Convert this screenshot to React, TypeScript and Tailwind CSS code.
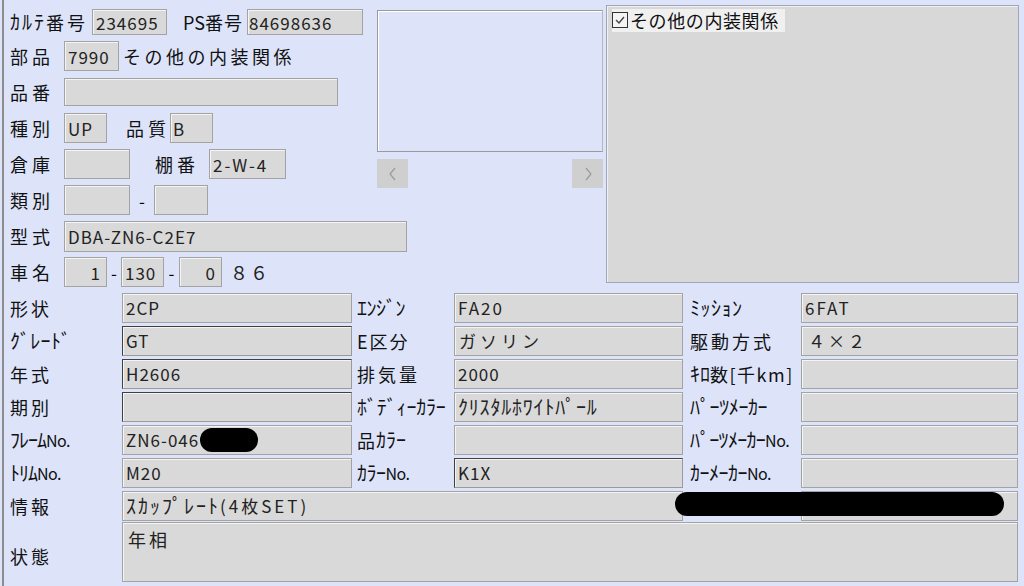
import React from "react";

const F = "font-['Noto_Sans_CJK_JP','Liberation_Sans',sans-serif]";

function Field({
  w,
  h = 30,
  children,
  dark = false,
  right = false,
  className = "",
}: {
  w: number;
  h?: number;
  children?: React.ReactNode;
  dark?: boolean;
  right?: boolean;
  className?: string;
}) {
  return (
    <div
      style={{ width: w, height: h }}
      className={`shrink-0 flex items-center bg-[#d9d9d9] border ${
        dark
          ? "border-t-[#404040] border-l-[#404040] border-r-[#9a9a9a] border-b-[#9a9a9a]"
          : "border-[#a3a3a3]"
      } shadow-[inset_1px_1px_0_#f4f4f4] px-[3px] text-[17px] tracking-[1px] leading-none text-[#222] overflow-hidden whitespace-nowrap ${
        right ? "justify-end" : ""
      } ${className}`}
    >
      {children}
    </div>
  );
}

function L({ w, children, className = "" }: { w: number; children?: React.ReactNode; className?: string }) {
  return (
    <div style={{ width: w }} className={`shrink-0 text-[18px] leading-none text-[#111] whitespace-nowrap flex items-center ${className}`}>
      {children}
    </div>
  );
}

function TopRow({ h = 36, children }: { h?: number; children: React.ReactNode }) {
  return (
    <div style={{ height: h }} className="flex items-center">
      {children}
    </div>
  );
}

function Half({ children, t = 1 }: { children: React.ReactNode; t?: number }) {
  return (
    <span style={{ letterSpacing: t - 1 }} className="text-[20px] leading-none">
      {children}
    </span>
  );
}

function No() {
  return <span className="text-[16px] tracking-[-0.5px] leading-none">No.</span>;
}

function Full({ children }: { children: React.ReactNode }) {
  return <span className="tracking-[3px]">{children}</span>;
}

function LowRow({
  l1,
  v1,
  d1,
  l2,
  v2,
  d2,
  l3,
  v3,
  d3,
}: {
  l1: React.ReactNode;
  v1?: React.ReactNode;
  d1?: boolean;
  l2: React.ReactNode;
  v2?: React.ReactNode;
  d2?: boolean;
  l3: React.ReactNode;
  v3?: React.ReactNode;
  d3?: boolean;
}) {
  return (
    <div className="flex items-center h-[33px]">
      <L w={114} className="pl-[2px]">{l1}</L>
      <Field w={230} dark={d1}>{v1}</Field>
      <L w={102} className="pl-[5px]">{l2}</L>
      <Field w={229} dark={d2}>{v2}</Field>
      <L w={118} className="pl-[7px]">{l3}</L>
      <Field w={217} dark={d3}>{v3}</Field>
    </div>
  );
}

export default function App() {
  return (
    <div className={`${F} w-[1024px] h-[586px] bg-[#dde4fa] relative overflow-hidden`}>
      <div className="absolute left-[2px] top-0 bottom-0 w-[2px] bg-[#8c8c8c]" />
      <div className="pl-[8px] pt-[6px]">
        <div className="flex">
          {/* left column */}
          <div className="w-[369px] shrink-0 flex flex-col">
            <TopRow h={32}>
              <L w={84} className="pl-[2px]"><Half t={3}>ｶﾙﾃ</Half><span className="tracking-[3px]">番号</span></L>
              <Field w={75} h={26} className="pl-[3px] tracking-[1.5px]">234695</Field>
              <L w={64} className="ml-[16px]">PS<span className="tracking-[1px]">番号</span></L>
              <Field w={116} h={26} className="pl-[1px] tracking-[1.5px]">84698636</Field>
            </TopRow>
            <TopRow>
              <L w={56} className="pl-[2px] tracking-[4px]">部品</L>
              <Field w={55}>7990</Field>
              <div className="ml-[4px] text-[18px] leading-none tracking-[3.5px] whitespace-nowrap text-[#111]">その他の内装関係</div>
            </TopRow>
            <TopRow>
              <L w={56} className="pl-[2px] tracking-[4px]">品番</L>
              <Field w={274} h={28} />
            </TopRow>
            <TopRow>
              <L w={56} className="pl-[2px] tracking-[4px]">種別</L>
              <Field w={43}>UP</Field>
              <L w={44} className="ml-[19px] tracking-[4px]">品質</L>
              <Field w={43} className="pl-[2px]">B</Field>
            </TopRow>
            <TopRow>
              <L w={56} className="pl-[2px] tracking-[4px]">倉庫</L>
              <Field w={66} />
              <L w={54} className="ml-[25px] tracking-[4px]">棚番</L>
              <Field w={77} className="tracking-[2px]">2-W-4</Field>
            </TopRow>
            <TopRow>
              <L w={56} className="pl-[2px] tracking-[4px]">類別</L>
              <Field w={66} />
              <div className="w-[24px] text-center text-[17px] leading-none">-</div>
              <Field w={54} />
            </TopRow>
            <TopRow>
              <L w={56} className="pl-[2px] tracking-[4px]">型式</L>
              <Field w={343} h={31}>DBA-ZN6-C2E7</Field>
            </TopRow>
            <TopRow>
              <L w={56} className="pl-[2px] tracking-[4px]">車名</L>
              <Field w={43} right className="tracking-[0px] pr-[5px]">1</Field>
              <div className="w-[14px] text-center text-[17px] leading-none">-</div>
              <Field w={43}>130</Field>
              <div className="w-[15px] text-center text-[17px] leading-none">-</div>
              <Field w={43} right className="tracking-[0px] pr-[5px]">0</Field>
              <div className="ml-[8px] text-[18px] leading-none tracking-[2px] text-[#222]">８６</div>
            </TopRow>
          </div>

          {/* middle column: image */}
          <div className="w-[229px] shrink-0 flex flex-col pt-[4px]">
            <div className="w-[226px] h-[142px] border border-t-[#9a9a9a] border-l-[#9a9a9a] border-r-[#b8b8b8] border-b-[#9a9a9a] bg-[#dde4fa] shadow-[inset_1px_1px_0_#ffffff]" />
            <div className="flex justify-between w-[226px] mt-[7px]">
              <div className="w-[31px] h-[29px] bg-[#cfcfcf] flex items-center justify-center">
                <svg width="10" height="14" viewBox="0 0 10 14"><path d="M7 1 L2 7 L7 13" stroke="#9a9a9a" strokeWidth="1.2" fill="none" /></svg>
              </div>
              <div className="w-[31px] h-[29px] bg-[#cfcfcf] flex items-center justify-center">
                <svg width="10" height="14" viewBox="0 0 10 14"><path d="M3 1 L8 7 L3 13" stroke="#9a9a9a" strokeWidth="1.2" fill="none" /></svg>
              </div>
            </div>
          </div>

          {/* right panel */}
          <div className="w-[413px] h-[278px] -mt-[1px] shrink-0 bg-[#d8d8d8] border border-[#9ea6bc] shadow-[inset_1px_1px_0_#f0f0f0] pl-[5px] pt-[1px]">
            <div className="inline-flex items-center h-[23px] bg-[#f0f0f0] pr-[6px]">
              <div className="w-[16px] h-[16px] border border-[#333] bg-[#f4f4f4] flex items-center justify-center mr-[2px]">
                <svg width="12" height="12" viewBox="0 0 12 12"><path d="M2 6 L5 9 L10 3" stroke="#444" strokeWidth="1.4" fill="none" /></svg>
              </div>
              <span className="text-[18px] leading-none text-[#111] tracking-[0.6px]">その他の内装関係</span>
            </div>
          </div>
        </div>
      </div>

      {/* lower grid */}
      <div className="absolute left-[8px] top-[291px]">
        <LowRow
          l1={<Full>形状</Full>}
          v1="2CP"
          l2={<Half t={0.5}>ｴﾝｼﾞﾝ</Half>}
          v2={<span className="tracking-[2px]">FA20</span>}
          l3={<Half t={1.5}>ﾐｯｼｮﾝ</Half>}
          v3={<span className="tracking-[2px]">6FAT</span>}
        />
        <LowRow
          l1={<Half t={1.3}>ｸﾞﾚｰﾄﾞ</Half>}
          v1="GT"
          d1
          l2={<span className="tracking-[2px]">E区分</span>}
          v2={<span className="tracking-[4px] pl-[1px]">ガソリン</span>}
          l3={<Full>駆動方式</Full>}
          v3={<span className="tracking-[3px] pl-[3px]">４×２</span>}
        />
        <LowRow
          l1={<Full>年式</Full>}
          v1="H2606"
          d1
          l2={<Full>排気量</Full>}
          v2="2000"
          l3={<span className="tracking-[1.5px]"><Half t={1}>ｷﾛ</Half>数[千km]</span>}
        />
        <LowRow
          l1={<Full>期別</Full>}
          d1
          l2={<Half t={0.8}>ﾎﾞﾃﾞｨｰｶﾗｰ</Half>}
          v2={<Half t={1.8}>ｸﾘｽﾀﾙﾎﾜｲﾄﾊﾟｰﾙ</Half>}
          l3={<Half t={0.6}>ﾊﾟｰﾂﾒｰｶｰ</Half>}
        />
        <LowRow
          l1={<><Half t={0}>ﾌﾚｰﾑ</Half><No /></>}
          v1="ZN6-046"
          l2={<><span className="tracking-[1px]">品</span><Half t={1}>ｶﾗｰ</Half></>}
          l3={<><Half t={0.3}>ﾊﾟｰﾂﾒｰｶｰ</Half><No /></>}
        />
        <LowRow
          l1={<><Half t={0}>ﾄﾘﾑ</Half><No /></>}
          v1="M20"
          l2={<><Half t={0.5}>ｶﾗｰ</Half><No /></>}
          v2="K1X"
          d2
          l3={<><Half t={0.5}>ｶｰﾒｰｶｰ</Half><No /></>}
        />
        <div className="flex items-center h-[33px]">
          <L w={114} className="pl-[2px]"><Full>情報</Full></L>
          <Field w={561}>
            <Half t={3}>ｽｶｯﾌﾟﾚｰﾄ</Half>
            <span className="text-[17px] tracking-[3px]">(4枚SET)</span>
          </Field>
          <div className="w-[118px] shrink-0" />
          <Field w={217} />
        </div>
        <div className="flex h-[61px]">
          <L w={114} className="pl-[2px] self-center pt-[6px]"><Full>状態</Full></L>
          <div className="w-[896px] h-[60px] bg-[#d9d9d9] border border-[#a3a3a3] shadow-[inset_1px_1px_0_#f4f4f4] px-[5px] pt-[7px] text-[18px] leading-none tracking-[3px] text-[#222]">
            年相
          </div>
        </div>
      </div>

      {/* redactions */}
      <div className="absolute left-[200px] top-[428px] w-[58px] h-[24px] rounded-full bg-black" />
      <div className="absolute left-[675px] top-[492px] w-[329px] h-[24px] rounded-full bg-black" />
    </div>
  );
}
